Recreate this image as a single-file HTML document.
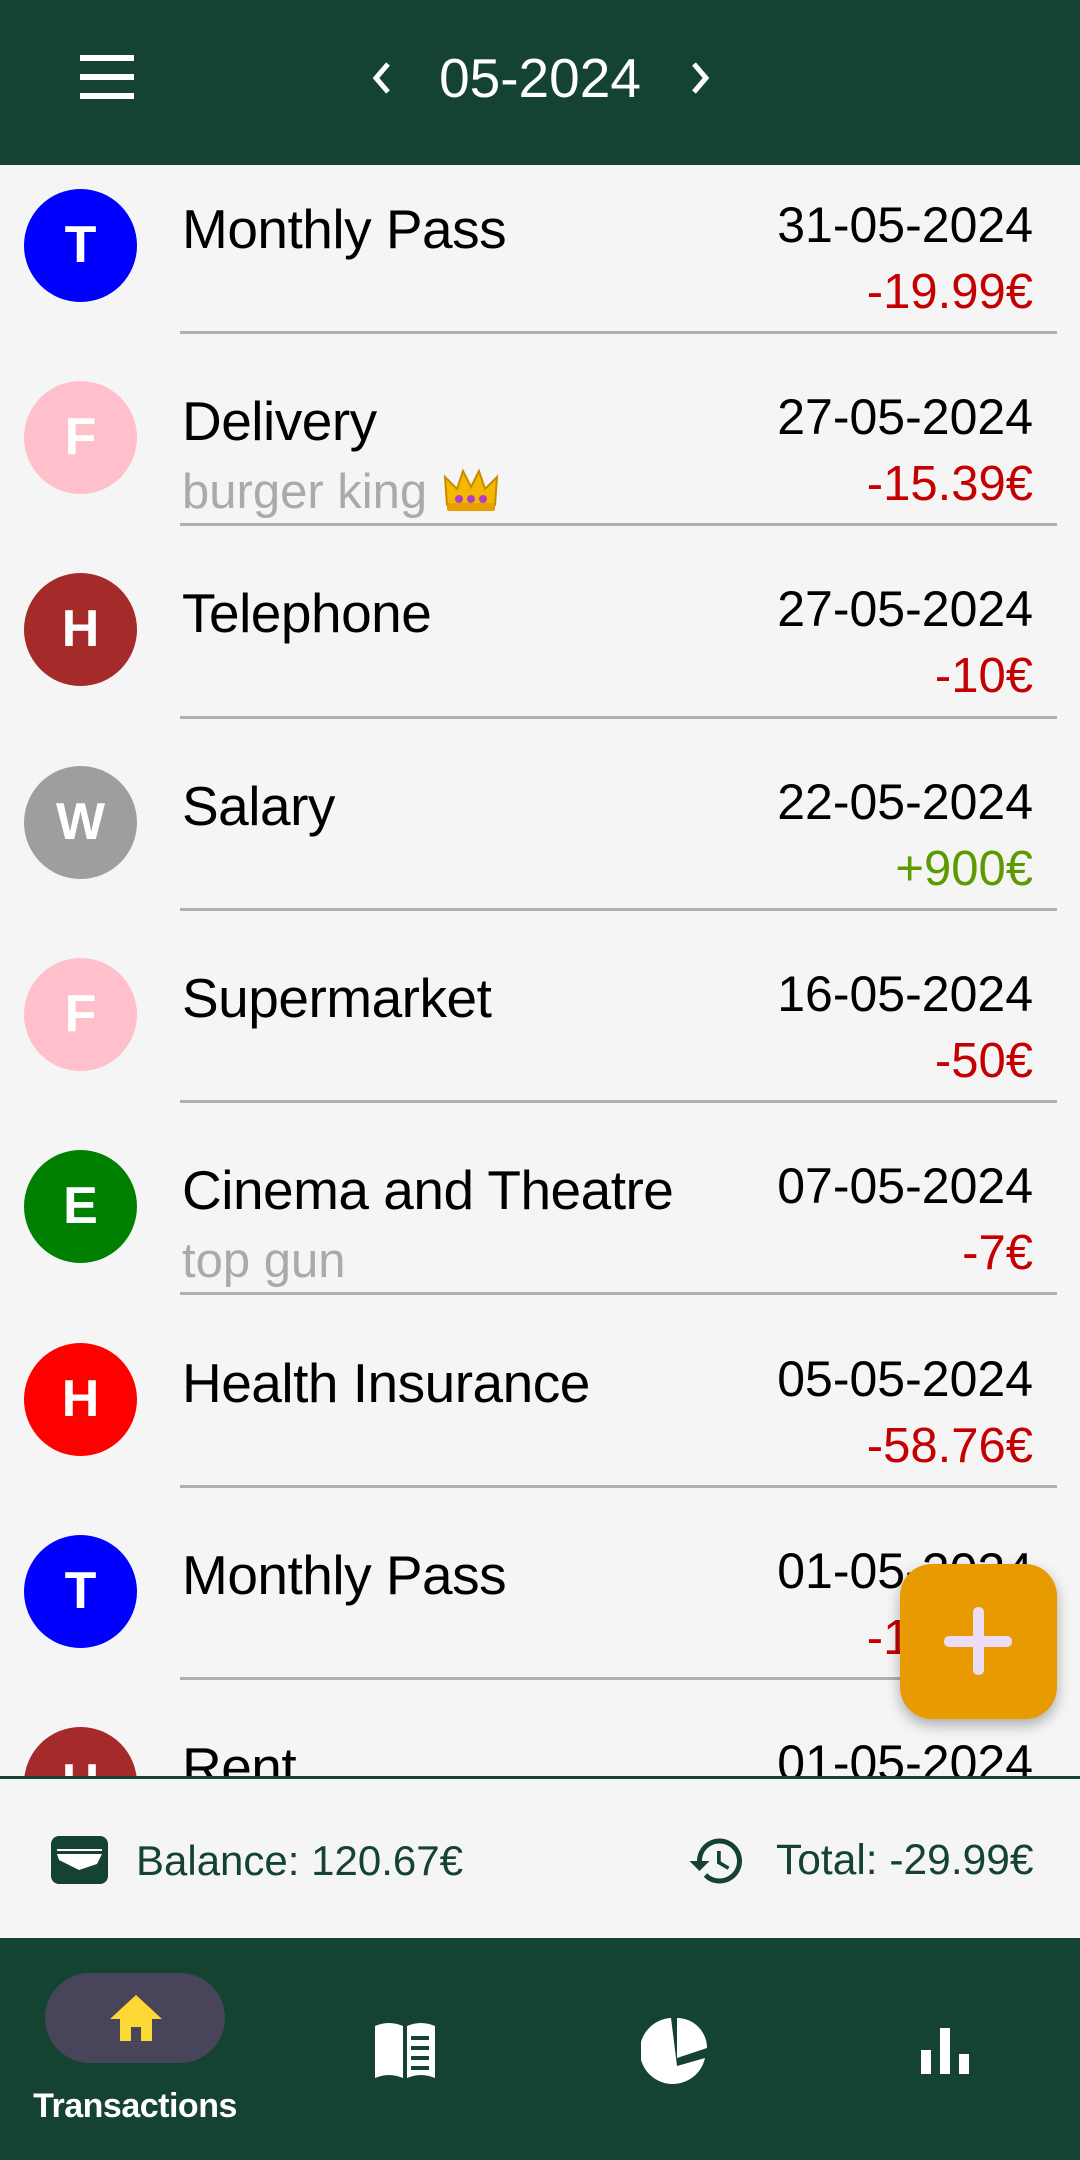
<!DOCTYPE html>
<html><head><meta charset="utf-8"><style>
*{margin:0;padding:0;box-sizing:border-box}
body{width:1080px;height:2160px;position:relative;overflow:hidden;background:#f5f5f5;font-family:"Liberation Sans",sans-serif}
.hdr{position:absolute;left:0;top:0;width:1080px;height:165px;background:#154332}
.t{position:absolute;white-space:nowrap;line-height:60px;height:60px}
.av{position:absolute;left:24px;width:113px;height:113px;border-radius:50%;color:#fff;font-weight:bold;font-size:52px;text-align:center;line-height:113px}
.div{position:absolute;left:180px;width:877px;height:3px;background:#b0b0b0}
.title{left:182px;font-size:55px;color:#000;letter-spacing:-0.5px}
.date{right:47px;font-size:50px;color:#000}
.amt{right:47px;font-size:49px}
.sub{left:182px;font-size:49px;color:#aaa}
.neg{color:#c40000}.pos{color:#5c9a00}
</style></head><body>
<div id="list" style="position:absolute;left:0;top:165px;width:1080px;height:1612px;overflow:hidden">
<div style="position:absolute;left:0;top:-165px;width:1080px;height:2000px">
<div class="av" style="top:189px;background:#0000ff">T</div>
<div class="t title" style="top:199px">Monthly Pass</div>
<div class="t date" style="top:195px">31-05-2024</div>
<div class="t amt neg" style="top:262px">-19.99€</div>
<div class="div" style="top:331px"></div>

<div class="av" style="top:381px;background:#ffc0cb">F</div>
<div class="t title" style="top:391px">Delivery</div>
<div class="t date" style="top:387px">27-05-2024</div>
<div class="t sub" style="top:462px">burger king <svg width="60" height="50" viewBox="0 0 60 48" style="vertical-align:-6px"><path d="M6 40 L4 12 L16 24 L22 6 L30 22 L38 6 L44 24 L56 12 L54 40 Z" fill="#f5b800" stroke="#c88a00" stroke-width="2"/><rect x="6" y="38" width="48" height="8" rx="2" fill="#e8a000"/><circle cx="18" cy="34" r="4" fill="#b03cc8"/><circle cx="30" cy="34" r="4" fill="#b03cc8"/><circle cx="42" cy="34" r="4" fill="#b03cc8"/></svg></div>
<div class="t amt neg" style="top:454px">-15.39€</div>
<div class="div" style="top:523px"></div>

<div class="av" style="top:573px;background:#a52a2a">H</div>
<div class="t title" style="top:583px">Telephone</div>
<div class="t date" style="top:579px">27-05-2024</div>
<div class="t amt neg" style="top:646px">-10€</div>
<div class="div" style="top:716px"></div>

<div class="av" style="top:766px;background:#9e9e9e">W</div>
<div class="t title" style="top:776px">Salary</div>
<div class="t date" style="top:772px">22-05-2024</div>
<div class="t amt pos" style="top:839px">+900€</div>
<div class="div" style="top:908px"></div>

<div class="av" style="top:958px;background:#ffc0cb">F</div>
<div class="t title" style="top:968px">Supermarket</div>
<div class="t date" style="top:964px">16-05-2024</div>
<div class="t amt neg" style="top:1031px">-50€</div>
<div class="div" style="top:1100px"></div>

<div class="av" style="top:1150px;background:#008000">E</div>
<div class="t title" style="top:1160px">Cinema and Theatre</div>
<div class="t date" style="top:1156px">07-05-2024</div>
<div class="t sub" style="top:1231px">top gun</div>
<div class="t amt neg" style="top:1223px">-7€</div>
<div class="div" style="top:1292px"></div>

<div class="av" style="top:1343px;background:#ff0000">H</div>
<div class="t title" style="top:1353px">Health Insurance</div>
<div class="t date" style="top:1349px">05-05-2024</div>
<div class="t amt neg" style="top:1416px">-58.76€</div>
<div class="div" style="top:1485px"></div>

<div class="av" style="top:1535px;background:#0000ff">T</div>
<div class="t title" style="top:1545px">Monthly Pass</div>
<div class="t date" style="top:1541px">01-05-2024</div>
<div class="t amt neg" style="top:1608px">-19.99€</div>
<div class="div" style="top:1677px"></div>

<div class="av" style="top:1727px;background:#a52a2a">H</div>
<div class="t title" style="top:1737px">Rent</div>
<div class="t date" style="top:1733px">01-05-2024</div>
</div></div>

<div class="hdr">
  <div style="position:absolute;left:80px;top:55px;width:54px;height:6px;background:#fff"></div>
  <div style="position:absolute;left:80px;top:74px;width:54px;height:6px;background:#fff"></div>
  <div style="position:absolute;left:80px;top:93px;width:54px;height:6px;background:#fff"></div>
  <svg style="position:absolute;left:370px;top:60px" width="26" height="36" viewBox="0 0 26 36"><path d="M18 4 L6 18 L18 32" fill="none" stroke="#fff" stroke-width="5"/></svg>
  <svg style="position:absolute;left:686px;top:60px" width="26" height="36" viewBox="0 0 26 36"><path d="M8 4 L20 18 L8 32" fill="none" stroke="#fff" stroke-width="5"/></svg>
  <div class="t" style="left:0;width:1080px;text-align:center;top:48px;font-size:55px;color:#fff">05-2024</div>
</div>

<div style="position:absolute;left:0;top:1776px;width:1080px;height:3px;background:#154332"></div>
<div style="position:absolute;left:0;top:1779px;width:1080px;height:159px;background:#f5f5f5">
  <svg style="position:absolute;left:51px;top:57px" width="57" height="48" viewBox="0 0 57 48"><rect x="0" y="0" width="57" height="48" rx="8" fill="#154332"/><path d="M6 18 L51 18 L46 28 L28 34 L8 24 Z" fill="#fff"/><path d="M6 14 L51 14" stroke="#fff" stroke-width="2"/></svg>
  <div class="t" style="left:136px;top:52px;font-size:42px;color:#154332">Balance: 120.67€</div>
  <svg style="position:absolute;left:686px;top:52px" width="62" height="60" viewBox="0 0 24 24"><path d="M13 3a9 9 0 0 0-9 9H1l3.9 3.9.1.1L9 12H6c0-3.9 3.1-7 7-7s7 3.1 7 7-3.1 7-7 7c-1.9 0-3.7-.8-4.9-2.1l-1.4 1.4C8.3 20 10.5 21 13 21a9 9 0 0 0 0-18zm-1 5v5l4.3 2.5.7-1.2-3.5-2.1V8z" fill="#154332"/></svg>
  <div class="t" style="left:776px;top:52px;font-size:42.5px;color:#154332">Total: -29.99€</div>
</div>

<div style="position:absolute;left:900px;top:1564px;width:157px;height:155px;border-radius:32px;background:#e89b00;box-shadow:0 6px 14px rgba(0,0,0,.3)">
  <div style="position:absolute;left:44px;top:72px;width:68px;height:11px;border-radius:5px;background:#ecdcf8"></div>
  <div style="position:absolute;left:73px;top:43px;width:11px;height:68px;border-radius:5px;background:#ecdcf8"></div>
</div>

<div style="position:absolute;left:0;top:1938px;width:1080px;height:222px;background:#154332">
  <div style="position:absolute;left:45px;top:35px;width:180px;height:90px;border-radius:45px;background:#48455a"></div>
  <svg style="position:absolute;left:108px;top:55px" width="56" height="50" viewBox="0 0 56 50"><path d="M28 2 L54 26 L44 26 L44 48 L33 48 L33 34 L23 34 L23 48 L12 48 L12 26 L2 26 Z" fill="#fdd835"/></svg>
  <div class="t" style="left:0;width:270px;text-align:center;top:138px;font-size:34px;font-weight:bold;color:#fff;height:60px;line-height:60px;letter-spacing:-0.5px">Transactions</div>
  <svg style="position:absolute;left:373px;top:82px" width="64" height="62" viewBox="0 0 64 62"><path d="M2 6 Q16 0 30 6 L30 58 Q16 52 2 58 Z M34 6 Q48 0 62 6 L62 58 Q48 52 34 58 Z" fill="#fff"/><path d="M38 18 H56 M38 28 H56 M38 38 H56 M38 48 H56" stroke="#154332" stroke-width="4"/></svg>
  <svg style="position:absolute;left:641px;top:78px" width="68" height="70" viewBox="0 0 68 70"><path d="M30 2 A33 33 0 1 0 64 42 L36 50 Z" fill="#fff"/><path d="M36 2 A30 30 0 0 1 66 32 L36 42 Z" fill="#fff"/></svg>
  <svg style="position:absolute;left:921px;top:90px" width="48" height="46" viewBox="0 0 48 46"><rect x="0" y="22" width="10" height="24" fill="#fff"/><rect x="19" y="0" width="10" height="46" fill="#fff"/><rect x="38" y="26" width="10" height="20" fill="#fff"/></svg>
</div>
</body></html>
